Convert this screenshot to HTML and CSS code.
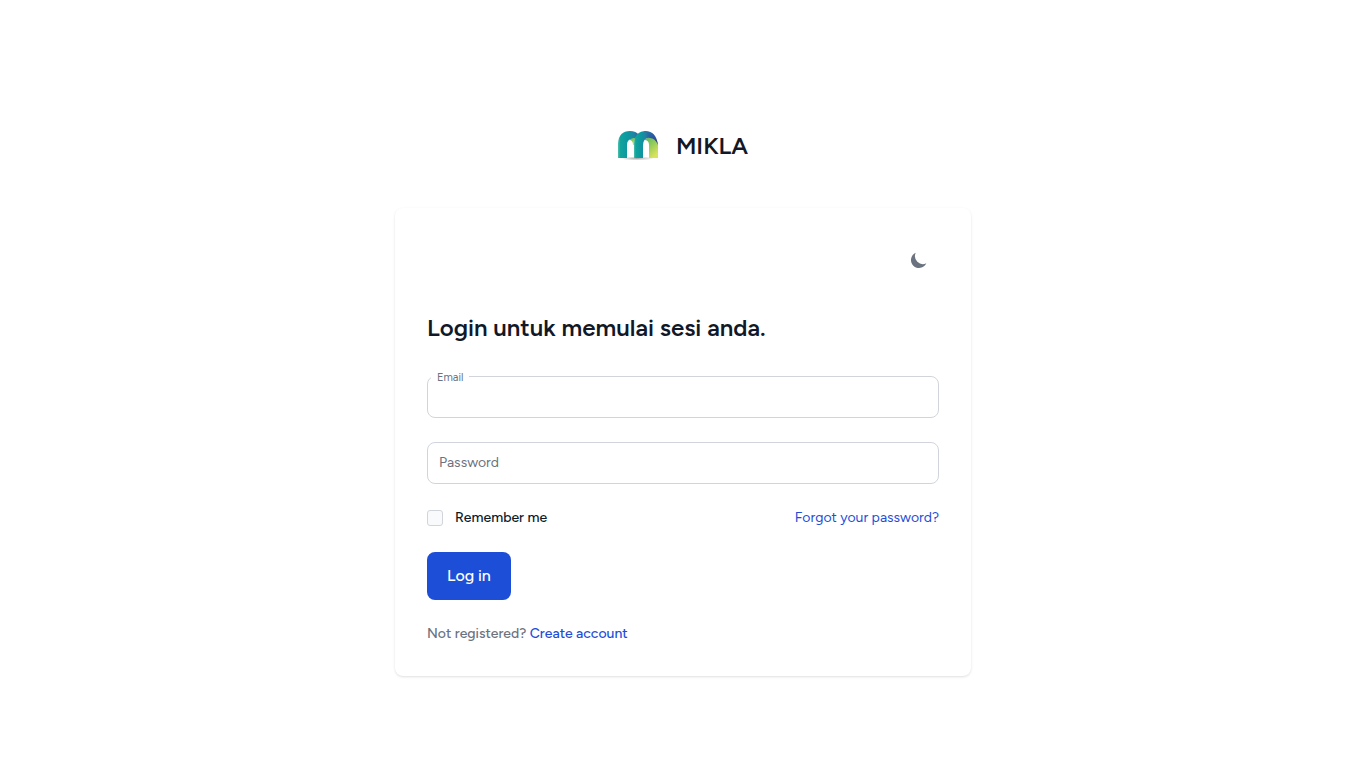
FILE: index.html
```html
<!DOCTYPE html>
<html lang="id">
<head>
<meta charset="utf-8">
<meta name="viewport" content="width=device-width, initial-scale=1">
<title>MIKLA</title>
<link rel="stylesheet" href="styles.css">
</head>
<body>
<main class="page">
  <a class="brand" href="#">
    <svg class="brand-logo" viewBox="0 0 40 30" aria-hidden="true">
      <defs>
        <linearGradient id="teal" x1="0" y1="0" x2="1" y2="0">
          <stop offset="0" stop-color="#4fbfae"/>
          <stop offset=".12" stop-color="#12a39c"/>
          <stop offset=".5" stop-color="#0b96a0"/>
          <stop offset=".75" stop-color="#2382a4"/>
          <stop offset="1" stop-color="#2d5fa5"/>
        </linearGradient>
        <linearGradient id="blue" x1="0" y1="0" x2="1" y2="1">
          <stop offset="0" stop-color="#2382a4"/>
          <stop offset=".5" stop-color="#2b58a3"/>
          <stop offset="1" stop-color="#39358b"/>
        </linearGradient>
        <linearGradient id="lime" x1="0" y1="0" x2=".6" y2="1">
          <stop offset="0" stop-color="#4fb368"/>
          <stop offset=".5" stop-color="#93cb5c"/>
          <stop offset="1" stop-color="#d9e35b"/>
        </linearGradient>
        <radialGradient id="shade">
          <stop offset="0" stop-color="#777" stop-opacity=".6"/>
          <stop offset="1" stop-color="#777" stop-opacity="0"/>
        </radialGradient>
      </defs>
      <ellipse cx="19" cy="27.500" rx="17" ry="2" fill="url(#shade)"/>
      <path fill="url(#lime)" d="M11 9Q15 5 19 8L18 14H15Q15 9 11 9Z"/>
      <path fill="url(#teal)" d="M0 27V12Q1 0 12 0Q18 0 21 4L18 8Q16 6 13 8Q9 9 9 14V27Z"/>
      <path fill="url(#lime)" d="M26 9Q31 4 37 7Q40 10 40 15V27H31V14Q31 9 26 9Z"/>
      <path fill="url(#blue)" d="M26 0Q38-1 40 14Q37 7 32 7Q28 6 25 9Z"/>
      <path fill="url(#teal)" d="M16 27V12Q17 0 28 0L31 6Q25 8 25 14V27Z"/>
    </svg>
    <span>MIKLA</span>
  </a>
  <section class="card">
    <button class="theme-toggle" type="button" aria-label="Toggle dark mode">
      <svg viewBox="0 0 20 20" aria-hidden="true"><path fill="currentColor" d="M17.293 13.293A8 8 0 016.707 2.707a8.001 8.001 0 1010.586 10.586z"/></svg>
    </button>
    <h1 class="title">Login untuk memulai sesi anda.</h1>
    <form class="form" action="#">
      <div class="field">
        <input class="input" id="email" type="email" autocomplete="username">
        <label class="label label-raised" for="email">Email</label>
      </div>
      <div class="field">
        <input class="input" id="password" type="password" autocomplete="current-password">
        <label class="label" for="password">Password</label>
      </div>
      <div class="options">
        <input class="checkbox" id="remember" type="checkbox">
        <label class="remember" for="remember">Remember me</label>
        <a class="link forgot" href="#">Forgot your password?</a>
      </div>
      <button class="submit" type="submit">Log in</button>
      <p class="register">Not registered? <a class="link" href="#">Create account</a></p>
    </form>
  </section>
</main>
</body>
</html>
```
FILE: styles.css
```css
* {
  box-sizing: border-box;
}

body {
  margin: 0;
  background: #fff;
  color: #111827;
  font-family: Figtree, Lato, "Liberation Sans", sans-serif;
  font-size: 14px;
  line-height: 20px;
}

.page {
  display: flex;
  flex-direction: column;
  align-items: center;
  gap: 46px;
  min-height: 100vh;
  padding: 130px 24px 32px 25px;
}

.brand {
  display: flex;
  align-items: center;
  gap: 18px;
  color: #111827;
  font-size: 24px;
  font-weight: 600;
  line-height: 32px;
  text-decoration: none;
}

.brand-logo {
  width: 40px;
  height: 32px;
}

.card {
  display: flex;
  flex-direction: column;
  gap: 32px;
  width: 100%;
  max-width: 576px;
  padding: 32px;
  border-radius: 8px;
  background: #fff;
  box-shadow: 0 1px 3px rgb(0 0 0 / 10%), 0 1px 2px -1px rgb(0 0 0 / 10%);
}

.theme-toggle {
  display: flex;
  align-self: flex-end;
  padding: 10px;
  border: 0;
  border-radius: 8px;
  background: transparent;
  color: #6b7280;
}

.theme-toggle svg {
  width: 20px;
  height: 20px;
}

.title {
  margin: 0;
  font-size: 24px;
  font-weight: 600;
  line-height: 32px;
}

.form {
  display: flex;
  flex-direction: column;
  gap: 24px;
}

.field {
  position: relative;
}

.input {
  display: block;
  width: 100%;
  height: 42px;
  padding: 10px;
  border: 1px solid #d1d5db;
  border-radius: 8px;
  background: #fff;
  color: inherit;
  font: inherit;
}

.label {
  position: absolute;
  top: 11px;
  left: 12px;
  color: #6b7280;
}

.label-raised {
  top: -5px;
  left: 4px;
  padding: 0 6px;
  background: #fff;
  font-size: 11px;
  line-height: 14px;
}

.options {
  display: flex;
  align-items: center;
  gap: 12px;
}

.checkbox {
  width: 16px;
  height: 16px;
  margin: 0;
  border: 1px solid #d1d5db;
  border-radius: 3px;
  background: #f9fafb;
  appearance: none;
}

.checkbox:checked {
  background: #1d4ed8;
}

.remember {
  font-weight: 500;
}

.link {
  color: #1d4ed8;
  text-decoration: none;
}

.forgot {
  margin-left: auto;
}

.submit {
  align-self: flex-start;
  padding: 12px 20px;
  border: 0;
  border-radius: 8px;
  background: #1d4ed8;
  color: #fff;
  font: inherit;
  font-size: 16px;
  font-weight: 500;
  line-height: 24px;
}

.register {
  margin: 0;
  color: #6b7280;
  font-weight: 500;
}
```
